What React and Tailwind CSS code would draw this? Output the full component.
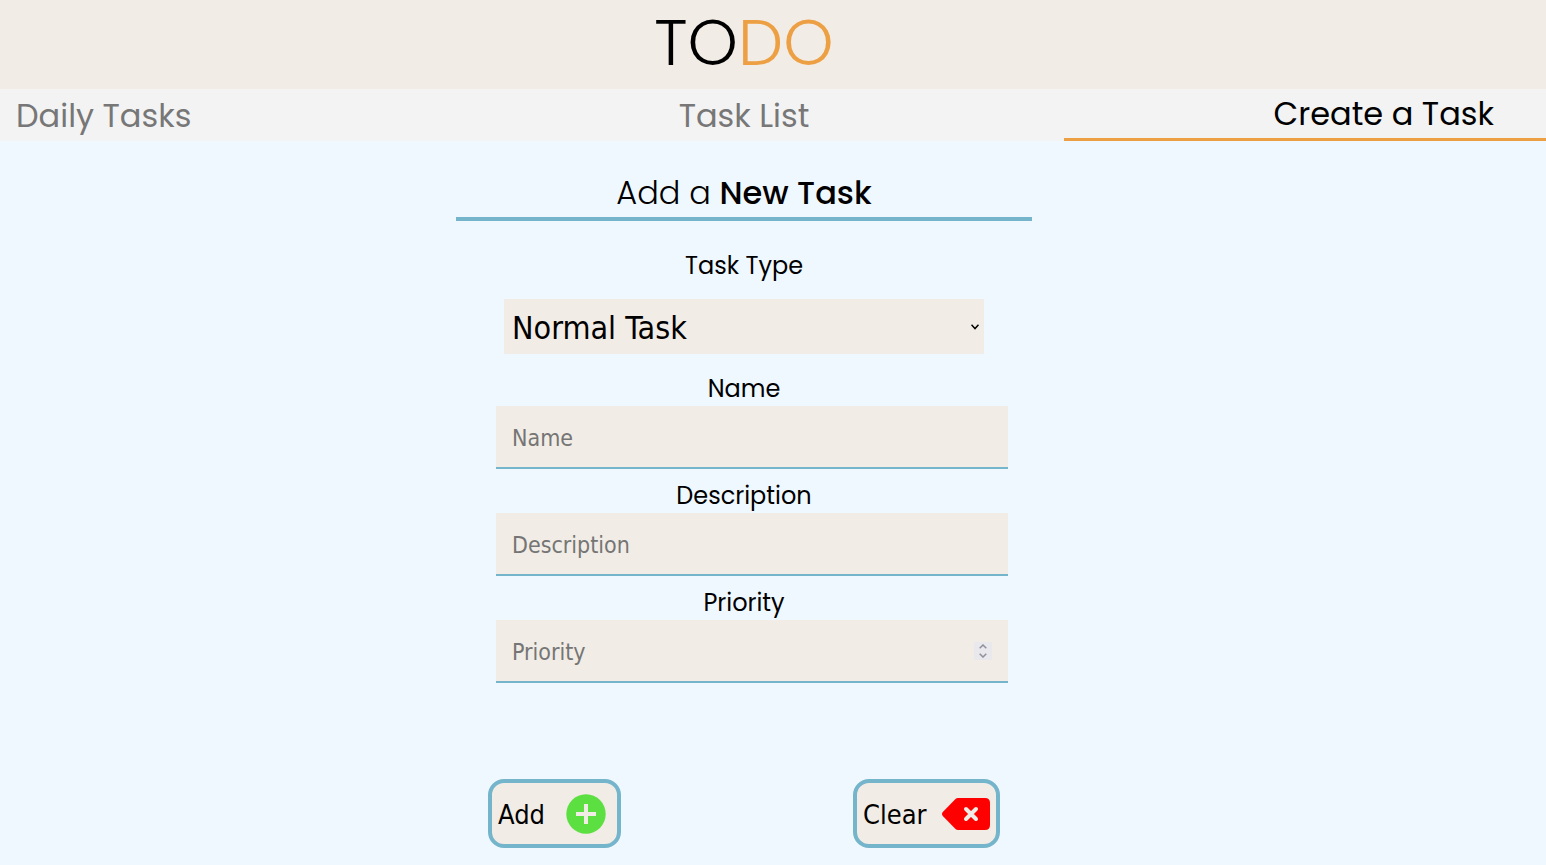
import React, { useState } from "react";

const display = "font-['Poppins','Inter',sans-serif]";
const control = "font-['DejaVu_Sans_Condensed','Noto_Sans',sans-serif]";

function Field({ id, label, children }) {
  return (
    <div className="mb-2">
      <label htmlFor={id} className="block h-9 text-center text-2xl leading-[38px]">
        {label}
      </label>
      <div className="flex h-[63px] w-[calc(100%+16px)] items-center border-b-2 border-[#75b5cc] bg-[#f1ece5] px-4">
        {children}
      </div>
    </div>
  );
}

const inputClass =
  "min-w-0 flex-1 appearance-none bg-transparent pt-0.5 font-['DejaVu_Sans_Condensed','Noto_Sans',sans-serif] text-[23px] leading-8 outline-none placeholder:text-[#757575] [appearance:textfield]";

function Stepper({ onStep }) {
  return (
    <div className="flex w-[18px] flex-col bg-[#e9e9ed] text-[#8f8f9d]">
      <button type="button" aria-label="Increase priority" onClick={() => onStep(1)} className="flex h-[9px] items-center justify-center">
        <svg width="8" height="5" viewBox="0 0 8 5" fill="none" stroke="currentColor" strokeWidth="1.5">
          <path d="M0.7 4.3 4 1l3.3 3.3" />
        </svg>
      </button>
      <button type="button" aria-label="Decrease priority" onClick={() => onStep(-1)} className="flex h-[9px] items-center justify-center">
        <svg width="8" height="5" viewBox="0 0 8 5" fill="none" stroke="currentColor" strokeWidth="1.5">
          <path d="M0.7 0.7 4 4l3.3-3.3" />
        </svg>
      </button>
    </div>
  );
}

export default function App() {
  const [type, setType] = useState("normal");
  const [name, setName] = useState("");
  const [description, setDescription] = useState("");
  const [priority, setPriority] = useState("");

  const clear = () => {
    setName("");
    setDescription("");
    setPriority("");
  };

  return (
    <div className={`min-h-screen bg-[#f0f8ff] text-black ${display}`}>
      <header className="bg-[#f1ece5] pr-[58px] pb-[3px]">
        <h1 className="text-center text-[64px] leading-[86px] font-light">
          TO<span className="text-[#ed9f43]">DO</span>
        </h1>
      </header>

      <nav className="grid h-[52px] grid-cols-[424fr_640fr_482fr] bg-[#f3f3f3] text-[32px] leading-[49px] text-[#777777]">
        <a href="#daily" className="pt-[2px] pl-4">Daily Tasks</a>
        <a href="#list" className="pt-[2px] text-center">Task List</a>
        <a href="#create" aria-current="page" className="border-b-[3px] border-[#ed9f43] pr-[52px] text-right text-black">
          Create a Task
        </a>
      </nav>

      <main className="pt-7 pr-[58px]">
        <div className="mx-auto max-w-[576px]">
          <h2 className="border-b-4 border-[#75b5cc] text-center text-[32px] leading-[48px] font-light">
            Add a <strong className="font-medium">New Task</strong>
          </h2>

          <form className="pt-[27px]" onSubmit={(e) => e.preventDefault()}>
            <div className="px-10">
              <label htmlFor="type" className="block h-9 text-center text-2xl leading-9">
                Task Type
              </label>
              <div className="relative mx-2 mt-[15px] mb-4">
                <select
                  id="type"
                  value={type}
                  onChange={(e) => setType(e.target.value)}
                  className={`block h-[55px] w-full appearance-none bg-[#f1ece5] px-2 pt-0.5 text-[32px] ${control}`}
                >
                  <option value="normal">Normal Task</option>
                  <option value="daily">Daily Task</option>
                </select>
                <svg className="pointer-events-none absolute top-[25px] right-[5px]" width="8" height="6" viewBox="0 0 8 6" fill="none" stroke="black" strokeWidth="1.5">
                  <path d="M0.5 0.8 4 4.6 7.5 0.8" />
                </svg>
              </div>

              <Field id="name" label="Name">
                <input id="name" type="text" placeholder="Name" value={name} onChange={(e) => setName(e.target.value)} className={inputClass} />
              </Field>
              <Field id="description" label="Description">
                <input id="description" type="text" placeholder="Description" value={description} onChange={(e) => setDescription(e.target.value)} className={inputClass} />
              </Field>
              <Field id="priority" label="Priority">
                <input id="priority" type="number" placeholder="Priority" value={priority} onChange={(e) => setPriority(e.target.value)} className={inputClass} />
                <Stepper onStep={(d) => setPriority(String(Number(priority) + d))} />
              </Field>
            </div>

            <div className={`mt-24 flex justify-between px-8 ${control}`}>
              <button type="submit" className="flex h-[69px] w-[133px] items-center justify-between rounded-2xl border-4 border-[#75b5cc] bg-[#f1ece5] pr-[11px] pl-[6px] text-[27px]">
                <span className="pt-1">Add</span>
                <svg width="40" height="40" viewBox="0 0 40 40" aria-hidden="true">
                  <circle cx="20" cy="20" r="19.7" fill="#5cdf40" />
                  <path d="M20 10v20M10 20h20" stroke="#f1ece5" strokeWidth="4" />
                </svg>
              </button>
              <button type="button" onClick={clear} className="flex h-[69px] w-[147px] items-center justify-between rounded-2xl border-4 border-[#75b5cc] bg-[#f1ece5] px-[6px] text-[27px]">
                <span className="pt-1">Clear</span>
                <svg width="48" height="32" viewBox="0 0 48 32" aria-hidden="true">
                  <path d="M16 0H43Q48 0 48 5V27Q48 32 43 32H16Q14.5 32 13.5 31L0.8 18Q-0.8 16 0.8 14L13.5 1Q14.5 0 16 0Z" fill="#fe0000" />
                  <path d="M24 11 34 21M34 11 24 21" stroke="#f1ece5" strokeWidth="4" strokeLinecap="round" />
                </svg>
              </button>
            </div>
          </form>
        </div>
      </main>
    </div>
  );
}
